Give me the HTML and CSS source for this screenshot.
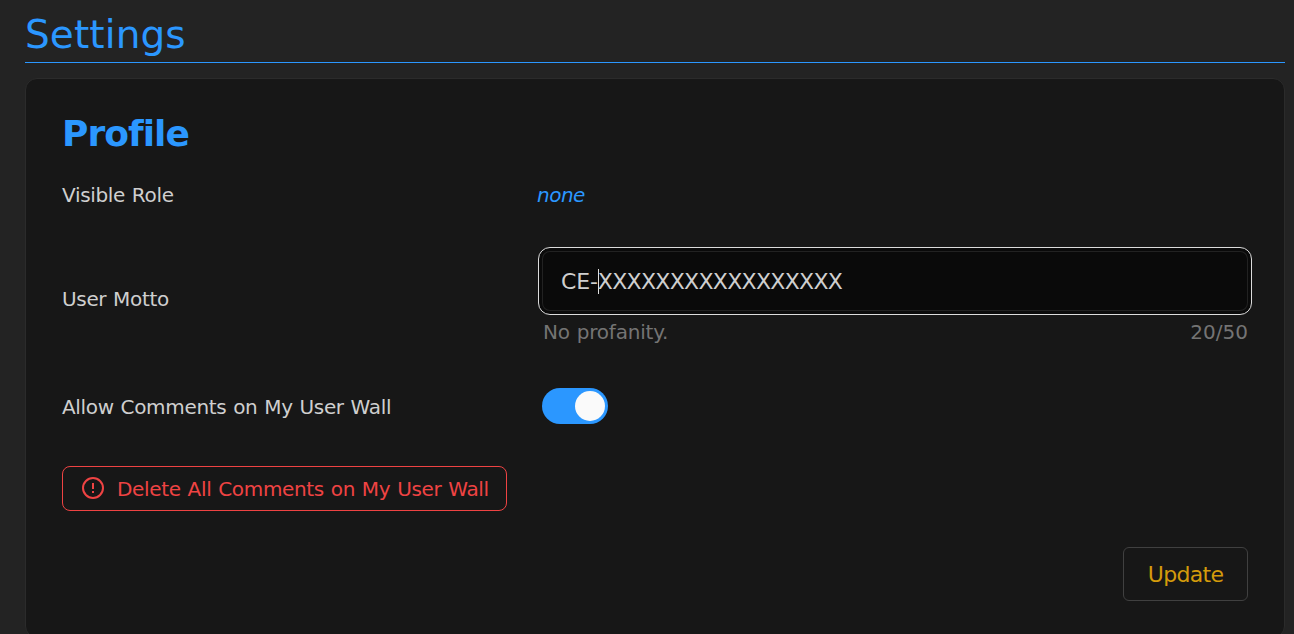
FILE: index.html
```html
<!DOCTYPE html>
<html lang="en">
<head>
<meta charset="utf-8">
<title>Settings</title>
<link rel="stylesheet" href="styles.css">
</head>
<body>
<main class="page">
  <h1 class="page-title"><span>Settings</span></h1>
  <section class="card">
    <h2 class="card-title"><span>Profile</span></h2>
    <div class="row row-role">
      <span class="label label-role">Visible Role</span>
      <em class="role">none</em>
    </div>
    <div class="row row-motto">
      <span class="label label-motto">User Motto</span>
      <div class="field">
        <div class="input" role="textbox"><span class="before">CE-</span><span class="caret"></span><span class="after">XXXXXXXXXXXXXXXXX</span></div>
        <div class="hints"><span class="hint">No profanity.</span><span class="count">20/50</span></div>
      </div>
    </div>
    <div class="row row-comments">
      <span class="label label-comments">Allow Comments on My User Wall</span>
      <div class="switch" role="switch" aria-checked="true"><span class="knob"></span></div>
    </div>
    <button class="delete" type="button">
      <svg class="alert" viewBox="0 0 24 24" width="24" height="24" fill="none" stroke="currentColor" stroke-width="2"><circle cx="12" cy="12" r="10"/><path d="M12 7v6M12 15v2"/></svg>
      <span class="delete-text">Delete All Comments on My User Wall</span>
    </button>
    <div class="actions"><button class="update" type="button"><span>Update</span></button></div>
  </section>
</main>
</body>
</html>
```

FILE: styles.css
```css
* { box-sizing: border-box; }
html { height: 100%; overflow: hidden; background: #232323; }
body {
  margin: 0;
  height: 634px;
  overflow: hidden;
  background: #232323;
  color: #cfcfcf;
  font-family: "DejaVu Sans", sans-serif;
  font-size: 20px;
  letter-spacing: -0.33px;
  word-spacing: 0.8px;
}
.page { padding: 0 9px 0 25px; }
.page-title {
  margin: 0 0 15px;
  height: 63px;
  padding-top: 12px;
  border-bottom: 1px solid #2b97ff;
  color: #2b97ff;
  font-size: 39px;
  font-weight: 400;
  letter-spacing: 0.1px;
  line-height: 46px;
}
.card {
  height: 560px;
  padding: 32px 36px 0;
  border: 1px solid #2b2b2b;
  border-radius: 12px;
  background: #171717;
}
.card-title {
  margin: 0;
  color: #2b97ff;
  font-size: 36px;
  font-weight: 700;
  letter-spacing: -0.95px;
  line-height: 46px;
}
.row {
  display: grid;
  grid-template-columns: 475px 1fr;
  align-items: center;
  line-height: 24px;
}
.label { white-space: nowrap; }
.row-role { margin-top: 26px; }
.role { color: #2b97ff; letter-spacing: -0.5px; }
.row-motto { margin-top: 40px; }
.label-motto { padding-top: 7px; }
.field { margin-right: -4px; padding-left: 1px; }
.input {
  display: flex;
  align-items: center;
  height: 68px;
  padding: 1px 0 0 22px;
  border: 1px solid #dcdcdc;
  border-radius: 12px;
  background: #0a0a0a;
  box-shadow: inset 0 0 0 3px #0a0a0a, inset 0 0 0 4px #222;
  font-size: 22px;
  letter-spacing: -0.69px;
}
.before { letter-spacing: -0.15px; }
.caret { width: 1px; height: 25px; margin-right: -1px; background: #e0e0e0; }
.hints {
  display: flex;
  justify-content: space-between;
  padding: 5px 4px 0 5px;
  color: #747474;
}
.hint { letter-spacing: -0.2px; }
.count { letter-spacing: 0; }
.row-comments { margin-top: 44px; }
.label-comments { padding-top: 2px; }
.switch {
  display: flex;
  justify-content: flex-end;
  width: 66px;
  height: 36px;
  margin-left: 5px;
  padding: 3px;
  border-radius: 18px;
  background: #2b97ff;
}
.knob { width: 30px; height: 30px; border-radius: 50%; background: #fafafa; }
button { font: inherit; letter-spacing: inherit; word-spacing: inherit; background: none; margin: 0; white-space: nowrap; }
.delete {
  display: flex;
  align-items: center;
  width: 445px;
  height: 45px;
  margin-top: 42px;
  padding: 0 0 0 18px;
  border: 1px solid #ef4343;
  border-radius: 8px;
  color: #ef4343;
}
.alert { margin: 0 12px 2px 0; }
.actions { display: flex; justify-content: flex-end; margin-top: 36px; }
.update {
  width: 125px;
  height: 54px;
  padding: 0;
  border: 1px solid #404040;
  border-radius: 6px;
  color: #d49b0b;
  font-size: 22px;
  letter-spacing: -0.7px;
}
```
